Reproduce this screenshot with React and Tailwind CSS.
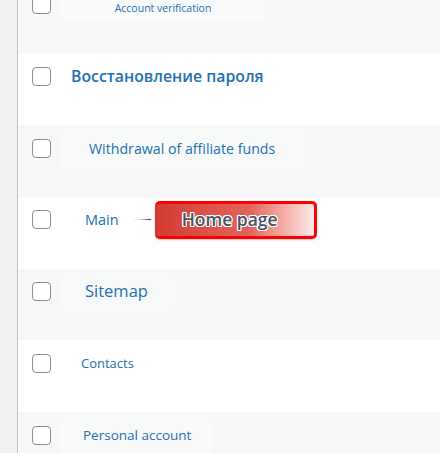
function Checkbox() {
  return <div className="w-[19px] h-[19px] shrink-0 rounded-[4px] border border-[#8c8f94] bg-white" />;
}

function Row({ striped, h, pt = 'pt-[14px]', children }) {
  return (
    <div className={`${h} ${pt} shrink-0 ${striped ? 'bg-[#f6f7f7]' : 'bg-white'}`}>
      <div className="flex items-center h-[19px] pl-[14px]">
        <Checkbox />
        {children}
      </div>
    </div>
  );
}

const outline =
  '1px 0 0 #fff, -1px 0 0 #fff, 0 1px 0 #fff, 0 -1px 0 #fff, 1px 1px 0 #fff, -1px -1px 0 #fff, 1px -1px 0 #fff, -1px 1px 0 #fff';

export default function App() {
  return (
    <div
      className="flex w-[440px] h-[453px] overflow-hidden bg-white text-[#2271b1]"
      style={{ fontFamily: '"Open Sans", "Noto Sans", sans-serif' }}
    >
      <div className="w-[18px] shrink-0 bg-[#f0f0f1] border-r border-[#c3c4c7]" />
      <div className="flex-1 flex flex-col">
        {/* first row is cut by the top edge */}
        <div className="relative h-[53px] shrink-0 bg-[#f6f7f7]">
          <div className="absolute left-[14px] top-[-5px]"><Checkbox /></div>
          <div className="absolute left-[43px] top-0 w-[202px] h-[22px] bg-[#f9fafa] rounded-b-md flex justify-center">
            <span className="text-[10.5px] leading-none mt-[3px] ml-[2px]">Account verification</span>
          </div>
        </div>

        <Row h="h-[72px]">
          <span className="ml-[20px] text-[15.8px] font-semibold">Восстановление пароля</span>
        </Row>

        <Row striped h="h-[72px]">
          <div className="ml-[10px] shrink-0 w-[242px] h-[40px] rounded-md bg-[#f8f9f9] flex items-center pl-[28px]">
            <span className="text-[14.2px]">Withdrawal of affiliate funds</span>
          </div>
        </Row>

        <Row h="h-[72px]" pt="pt-[13px]">
          <span className="ml-[34px] text-[14.5px]">Main</span>
          <div className="ml-[13px] w-[19px] h-[1px] bg-gradient-to-r from-transparent via-[#ccc] to-[#333]" />
          <div className="ml-[4px] shrink-0 w-[162px] h-[38px] rounded-[5px] border-[3px] border-l-0 border-[#ff0000] bg-gradient-to-r from-[#d23a30] via-[#e2645c] via-60% to-[#fbeaea] flex items-center pl-[27px] shadow-[0_1px_2px_rgba(0,0,0,0.25)]">
            <span className="text-[17.5px] font-semibold text-[#4a5262]" style={{ textShadow: outline }}>
              Home page
            </span>
          </div>
        </Row>

        <Row striped h="h-[71px]" pt="pt-[13px]">
          <div className="ml-[10px] shrink-0 w-[113px] h-[37px] rounded-md bg-[#f8f9f9] flex items-center pl-[24px]">
            <span className="text-[16.5px]">Sitemap</span>
          </div>
        </Row>

        <Row h="h-[72px]">
          <span className="ml-[30px] text-[13px]">Contacts</span>
        </Row>

        <div className="flex-1 bg-[#f6f7f7] pt-[14px]">
          <div className="flex items-center h-[19px] pl-[14px]">
            <Checkbox />
            <div className="ml-[8px] shrink-0 w-[154px] h-[38px] rounded-md bg-[#f8f9f9] flex items-center pl-[24px]">
              <span className="text-[13.5px]">Personal account</span>
            </div>
          </div>
        </div>
      </div>
    </div>
  );
}
